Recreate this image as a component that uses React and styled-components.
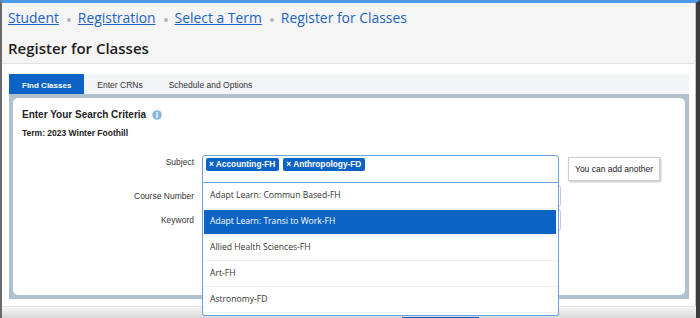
import React from 'react';
import styled, {createGlobalStyle} from 'styled-components';

const GlobalStyle = createGlobalStyle`
  html, body {
    margin: 0;
    padding: 0;
  }
  body {
    width: 700px;
    height: 318px;
    overflow: hidden;
    background: #fff;
    font-family: "Liberation Sans", Arial, sans-serif;
  }
`
const Page = styled.div`
  width: 700px;
  height: 318px;
  box-sizing: border-box;
  display: flex;
  flex-direction: column;
  border-top: 3px solid #4f9ae6;
  border-left: 2px solid #6a6a6a;
  border-right: 4px solid #3b3b3b;
`
const Header = styled.div`
  height: 61px;
  box-sizing: border-box;
  background: #f5f5f5;
  border-bottom: 1px solid #e1e1e1;
  border-right: 1px solid #c4c4c4;
  padding: 5px 6px 0;
  font-family: "Open Sans", sans-serif;
`
const Crumbs = styled.div`
  display: flex;
  align-items: center;
  font-size: 13.9px;
  line-height: 20px;
  color: #1c62c4;
`
const Crumb = styled.a`
  color: #1c62c4;
  text-decoration: ${p => p.current ? 'none' : 'underline'};
`
const Dot = styled.span`
  width: 4px;
  height: 4px;
  border-radius: 50%;
  background: #b4b4b4;
  margin: 3px 7px 0 8px;
`
const Title = styled.h1`
  margin: 10px 0 0;
  font-size: 15px;
  line-height: 20px;
  font-weight: 600;
  color: #1e1e1e;
`
const Main = styled.div`
  flex: 1;
  padding: 10px 6px 0 7px;
  border-right: 1px solid #c4c4c4;
`
const Tabs = styled.div`
  display: flex;
  height: 20px;
  background: #f3f4f6;
`
const Tab = styled.div`
  display: flex;
  align-items: center;
  padding: 2px 13px 0;
  font-size: ${p => p.active ? '8px' : '8.5px'};
  font-weight: ${p => p.active ? 'bold' : 'normal'};
  color: ${p => p.active ? '#fff' : '#333'};
  background: ${p => p.active ? '#0b63c5' : 'transparent'};
`
const Panel = styled.div`
  height: 205px;
  box-sizing: border-box;
  padding: 4px;
  background: #b1c0cf;
`
const PanelBody = styled.div`
  height: 100%;
  box-sizing: border-box;
  background: #fff;
  border-radius: 5px;
  padding: 11px 9px 0;
`
const Heading = styled.div`
  display: flex;
  align-items: center;
  gap: 6px;
  font-size: 10px;
  line-height: 12px;
  font-weight: bold;
  color: #222;
`
const Term = styled.div`
  margin-top: 7px;
  font-size: 8.5px;
  line-height: 11px;
  font-weight: bold;
  color: #222;
`
const Form = styled.div`
  margin-top: 16px;
  display: grid;
  grid-template-columns: 172px 1fr;
  column-gap: 8px;
  row-gap: 2px;
`
const Label = styled.div`
  text-align: right;
  font-size: 8.5px;
  line-height: ${p => p.tall ? '22px' : '11px'};
  padding-top: ${p => p.tall ? '0' : '2px'};
  color: #333;
`
const Field = styled.div`
  display: flex;
  align-items: flex-start;
`
const SelectWrap = styled.div`
  position: relative;
  width: 357px;
`
const SelectBox = styled.div`
  height: 28px;
  box-sizing: border-box;
  display: flex;
  align-items: flex-start;
  gap: 4px;
  padding: 2px 3px;
  border: 1px solid #6c9fdf;
  border-radius: 3px 3px 0 0;
`
const Tag = styled.span`
  height: 13px;
  line-height: 13px;
  padding: 0 4px 0 3px;
  border-radius: 2px;
  background: #0b63c5;
  color: #fff;
  font-size: 8.3px;
  font-weight: bold;
  white-space: nowrap;
`
const Hint = styled.div`
  margin: 2px 0 0 9px;
  height: 24px;
  box-sizing: border-box;
  padding: 0 6px;
  border: 1px solid #cfcfcf;
  box-shadow: 1px 1px 2px rgba(0, 0, 0, 0.25);
  font-size: 8.5px;
  line-height: 22px;
  color: #222;
  white-space: nowrap;
`
const TextInput = styled.div`
  width: 359px;
  height: 22px;
  box-sizing: border-box;
  border: 1px solid #c6c6c6;
  border-radius: 3px;
`
const Dropdown = styled.div`
  position: absolute;
  top: 28px;
  left: 0;
  width: 357px;
  box-sizing: border-box;
  z-index: 5;
  background: #fff;
  border: 1px solid #6c9fdf;
  border-top: none;
  border-radius: 0 0 3px 3px;
  padding-bottom: 2px;
  font-family: "Open Sans", sans-serif;
`
const Option = styled.div`
  height: 26px;
  box-sizing: border-box;
  padding: 1px 2px 1px 1px;
  border-bottom: 1px solid #efefef;
`
const OptionText = styled.div`
  height: 24px;
  line-height: 23px;
  padding-left: 6px;
  font-size: 8.6px;
  color: ${p => p.active ? '#fff' : '#333'};
  background: ${p => p.active ? '#0b63c5' : 'transparent'};
`
const Footer = styled.div`
  height: 12px;
  box-sizing: border-box;
  overflow: hidden;
  padding: 10px 0 0 400px;
  background: linear-gradient(#f4f4f4, #d9d9d9);
  border-top: 1px solid #e6e6e6;
`
const FooterButton = styled.div`
  width: 77px;
  height: 20px;
  background: #0b63c5;
`

const InfoIcon = () => (
  <svg width="10" height="10" viewBox="0 0 10 10">
    <circle cx="5" cy="5" r="4.8" fill="#8db8e3" />
    <rect x="4.3" y="4.2" width="1.4" height="3.6" fill="#fff" />
    <circle cx="5" cy="2.9" r="0.8" fill="#fff" />
  </svg>
)

const subjects = [
  'Adapt Learn: Commun Based-FH',
  'Adapt Learn: Transi to Work-FH',
  'Allied Health Sciences-FH',
  'Art-FH',
  'Astronomy-FD',
];

export default function App() {
  return (
    <Page>
      <GlobalStyle />
      <Header>
        <Crumbs>
          <Crumb>Student</Crumb><Dot />
          <Crumb>Registration</Crumb><Dot />
          <Crumb>Select a Term</Crumb><Dot />
          <Crumb current>Register for Classes</Crumb>
        </Crumbs>
        <Title>Register for Classes</Title>
      </Header>
      <Main>
        <Tabs>
          <Tab active>Find Classes</Tab>
          <Tab>Enter CRNs</Tab>
          <Tab>Schedule and Options</Tab>
        </Tabs>
        <Panel>
          <PanelBody>
            <Heading>Enter Your Search Criteria <InfoIcon /></Heading>
            <Term>Term: 2023 Winter Foothill</Term>
            <Form>
              <Label>Subject</Label>
              <Field>
                <SelectWrap>
                  <SelectBox>
                    <Tag>× Accounting-FH</Tag>
                    <Tag>× Anthropology-FD</Tag>
                  </SelectBox>
                  <Dropdown>
                    {subjects.map((s, i) => (
                      <Option key={s}>
                        <OptionText active={i === 1}>{s}</OptionText>
                      </Option>
                    ))}
                  </Dropdown>
                </SelectWrap>
                <Hint>You can add another</Hint>
              </Field>
              <Label tall>Course Number</Label>
              <Field><TextInput /></Field>
              <Label tall>Keyword</Label>
              <Field><TextInput /></Field>
            </Form>
          </PanelBody>
        </Panel>
      </Main>
      <Footer>
        <FooterButton />
      </Footer>
    </Page>
  )
}
